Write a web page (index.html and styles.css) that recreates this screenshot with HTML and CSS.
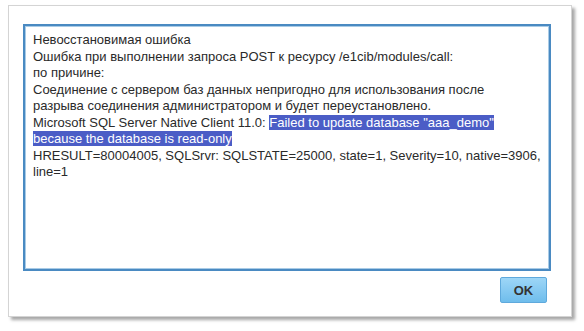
FILE: index.html
```html
<!DOCTYPE html>
<html>
<head>
  <title>Ошибка</title>
  <link rel="stylesheet" href="styles.css">
</head>
<body>
  <div class="dialog">
    <div class="message">
      Невосстановимая ошибка<br>
      Ошибка при выполнении запроса POST к ресурсу /e1cib/modules/call:<br>
      по причине:<br>
      Соединение с сервером баз данных непригодно для использования после<br>
      разрыва соединения администратором и будет переустановлено.<br>
      Microsoft SQL Server Native Client 11.0: <span class="selected">Failed to update database "aaa_demo" <br>because the database is read-only</span><br>
      HRESULT=80004005, SQLSrvr: SQLSTATE=25000, state=1, Severity=10, native=3906,<br>
      line=1
    </div>
    <div class="buttons">
      <button type="button" class="ok">OK</button>
    </div>
  </div>
</body>
</html>
```

FILE: styles.css
```css
body {
  margin: 0;
  padding: 5px 12px 14px 8px;
  background-color: #fff;
  font-family: "Liberation Sans", Arial, sans-serif;
}

.dialog {
  width: 564px;
  height: 312px;
  box-sizing: border-box;
  padding: 18px 20px 13px 14px;
  background-color: #fff;
  border: 1px solid #d4d4d4;
  box-shadow: 3px 3px 3px rgba(0, 0, 0, 0.35);
  display: flex;
  flex-direction: column;
}

.message {
  height: 247px;
  box-sizing: border-box;
  padding: 6px 8px;
  border: 2px solid #4a8ac2;
  box-shadow: inset 0 0 0 1px #a9cbe6;
  color: #2a2a2a;
  font-size: 13px;
  line-height: 16.5px;
  white-space: nowrap;
}

.selected {
  background-color: #4b5dc6;
  color: #fff;
}

.buttons {
  display: flex;
  justify-content: flex-end;
  padding-top: 6px;
  padding-right: 4px;
}

.ok {
  width: 47px;
  height: 26px;
  border: 1px solid #5fa9dc;
  border-radius: 2px;
  background: linear-gradient(#9dd6f7, #6fbdec);
  color: #333;
  font-family: "Liberation Sans", Arial, sans-serif;
  font-size: 13px;
  font-weight: bold;
  padding: 0;
}
```
